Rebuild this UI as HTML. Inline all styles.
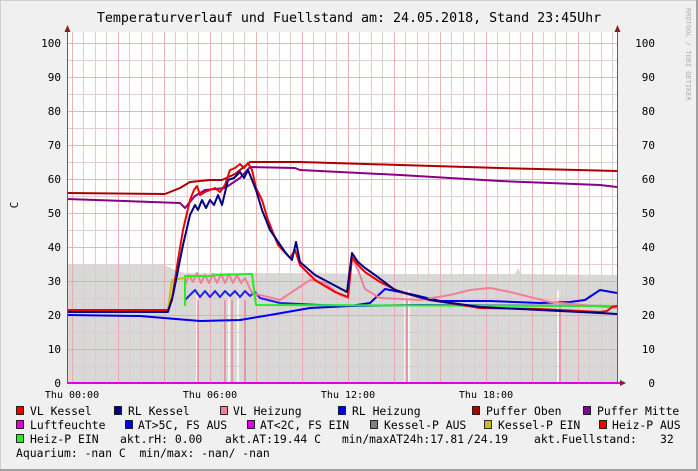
<!DOCTYPE html>
<html><head><meta charset="utf-8"><style>
body{margin:0;width:698px;height:471px;overflow:hidden;background:#f0f0f0}
svg{display:block}
text{font-family:"DejaVu Sans Mono","Liberation Mono",monospace;fill:#000;white-space:pre}
</style></head><body>
<svg width="698" height="471" xmlns="http://www.w3.org/2000/svg" xml:space="preserve">
<rect x="0" y="0" width="698" height="471" fill="#f0f0f0"/>
<path d="M0.5 470.5V0.5H697.5" stroke="#d0d0d0" fill="none"/>
<path d="M697 0V470H0" stroke="#a0a0a0" stroke-width="2" fill="none"/>
<text x="349" y="22" font-size="13.3" text-anchor="middle">Temperaturverlauf und Fuellstand am: 24.05.2018, Stand 23:45Uhr</text>
<text transform="translate(686,8) rotate(90)" font-size="7" style="fill:#b0b0b0">RRDTOOL / TOBI OETIKER</text>
<rect x="67" y="32" width="550" height="351" fill="#fff"/>
<polygon fill="#d8d8d8" points="67,265 165,265 175,270 185,273 300,273 400,274 515,274 518,268 521,274 617,275 617,383 67,383"/>
<g stroke="#fff" stroke-width="1.5"><line x1="197" y1="295" x2="197" y2="383"/><line x1="229" y1="295" x2="229" y2="383"/><line x1="238" y1="295" x2="238" y2="383"/><line x1="405" y1="290" x2="405" y2="383"/><line x1="409" y1="290" x2="409" y2="383"/><line x1="558" y1="290" x2="558" y2="383"/></g>
<g stroke-width="1">
<g stroke="#e0c8c8" opacity="0.9">
<path d="M83.5 32V383M95.5 32V383M106.5 32V383M129.5 32V383M141.5 32V383M152.5 32V383M175.5 32V383M187.5 32V383M198.5 32V383M221.5 32V383M233.5 32V383M244.5 32V383M267.5 32V383M279.5 32V383M290.5 32V383M313.5 32V383M325.5 32V383M336.5 32V383M359.5 32V383M371.5 32V383M382.5 32V383M405.5 32V383M417.5 32V383M428.5 32V383M451.5 32V383M463.5 32V383M474.5 32V383M497.5 32V383M509.5 32V383M520.5 32V383M543.5 32V383M555.5 32V383M566.5 32V383M589.5 32V383M601.5 32V383M612.5 32V383"/>
<path d="M67 366.5H617M67 332.5H617M67 298.5H617M67 264.5H617M67 230.5H617M67 196.5H617M67 162.5H617M67 128.5H617M67 94.5H617M67 60.5H617"/>
</g>
<g stroke="#f0a0a0" opacity="0.8">
<path d="M72.5 32V383M118.5 32V383M164.5 32V383M210.5 32V383M256.5 32V383M302.5 32V383M348.5 32V383M394.5 32V383M440.5 32V383M486.5 32V383M532.5 32V383M578.5 32V383"/>
<path d="M67 349.5H617M67 315.5H617M67 281.5H617M67 247.5H617M67 213.5H617M67 179.5H617M67 145.5H617M67 111.5H617M67 77.5H617M67 43.5H617"/>
</g>
</g>
<g fill="none" stroke-width="2" stroke-linejoin="round">
<polyline stroke="#f08098" stroke-width="1.5" points="198,300 198,383"/>
<polyline stroke="#f08098" stroke-width="1.5" points="225,300 225,383"/>
<polyline stroke="#f08098" stroke-width="1.5" points="232,300 232,383"/>
<polyline stroke="#f08098" stroke-width="1.5" points="245,300 245,383"/>
<polyline stroke="#f08098" stroke-width="1.5" points="407,300 407,383"/>
<polyline stroke="#f08098" stroke-width="1.5" points="560,300 560,383"/>
<polyline stroke="#0000ee" points="67,315 140,316 200,321 240,320 270,315 310,308 350,306 370,303 385,289 410,294 440,301 490,301 540,303 570,302 585,300 600,290 617,293"/>
<polyline stroke="#2020ee" points="185,300 190,295 195,290 200,297 205,291 210,297 215,291 220,297 225,291 230,296 235,291 240,297 245,291 250,296 255,292 260,298 280,303 320,305 350,306 420,305 617,306"/>
<polyline stroke="#f08098" points="185,285 189,275 193,282 197,273 201,283 205,275 209,283 213,274 217,283 221,274 225,283 229,274 233,283 237,275 241,283 245,278 252,293 280,300 295,290 310,280 325,283 340,295 348,298 352,258 358,270 365,289 380,298 420,300 450,295 470,290 490,288 510,292 550,302 617,308"/>
<polyline stroke="#22ee22" points="185,306 185,276 210,276 216,275 252,274 256,305 617,306"/>
<polyline stroke="#c8c000" points="168,310 172,280 185,278"/>
<polyline stroke="#aa0000" points="67,193 165,194 180,188 190,182 210,180 222,180 235,174 250,162 300,162 400,165 500,168 617,171"/>
<polyline stroke="#880088" points="67,199 180,203 185,208 195,196 205,190 225,188 240,178 250,167 295,168 300,170 400,175 500,181 600,185 617,187"/>
<polyline stroke="#ee0000" points="67,310 168,310 172,300 178,260 183,230 190,200 194,190 197,186 200,195 205,192 215,188 220,192 225,185 230,170 235,168 240,164 244,168 248,163 252,170 256,188 262,200 268,220 278,245 290,258 295,250 300,265 315,280 335,292 348,297 352,257 358,265 365,272 380,282 400,292 430,300 480,308 540,309 600,312 607,311 612,307 617,306"/>
<polyline stroke="#000080" points="67,312 168,312 173,295 178,270 183,245 190,215 195,205 198,210 202,200 206,208 210,200 214,205 218,195 222,205 228,180 234,178 240,172 244,178 248,170 252,180 256,190 262,210 270,230 285,252 292,260 296,242 300,262 315,275 330,283 347,292 352,253 358,262 365,268 375,275 395,290 430,300 480,307 540,310 600,313 617,314"/>
<line x1="67" y1="383" x2="622" y2="383" stroke="#e000e0" stroke-width="2"/>
</g>
<g stroke="#606060" stroke-width="1"><line x1="67.5" y1="32" x2="67.5" y2="383"/><line x1="617.5" y1="32" x2="617.5" y2="383"/></g>
<g fill="#802020"><path d="M64.5 32L67.5 25L70.5 32Z"/><path d="M614.5 32L617.5 25L620.5 32Z"/><path d="M620 380L626 383L620 386Z"/></g>
<g font-size="11" text-anchor="end">
<text x="61" y="47">100</text><text x="61" y="81">90</text><text x="61" y="115">80</text><text x="61" y="149">70</text><text x="61" y="183">60</text><text x="61" y="217">50</text><text x="61" y="251">40</text><text x="61" y="285">30</text><text x="61" y="319">20</text><text x="61" y="353">10</text><text x="61" y="387">0</text>
</g>
<g font-size="11" text-anchor="end">
<text x="655" y="47">100</text><text x="655" y="81">90</text><text x="655" y="115">80</text><text x="655" y="149">70</text><text x="655" y="183">60</text><text x="655" y="217">50</text><text x="655" y="251">40</text><text x="655" y="285">30</text><text x="655" y="319">20</text><text x="655" y="353">10</text><text x="655" y="387">0</text>
</g>
<text transform="translate(18,205) rotate(-90)" font-size="11" text-anchor="middle">C</text>
<g font-size="10" text-anchor="middle">
<text x="72" y="398">Thu 00:00</text><text x="210" y="398">Thu 06:00</text><text x="348" y="398">Thu 12:00</text><text x="486" y="398">Thu 18:00</text>
</g>
<g stroke="#000" stroke-width="0.8">
<rect x="16.5" y="406.5" width="7" height="8" fill="#ee0000"/>
<rect x="114.5" y="406.5" width="7" height="8" fill="#000080"/>
<rect x="220.5" y="406.5" width="7" height="8" fill="#f08098"/>
<rect x="338.5" y="406.5" width="7" height="8" fill="#0000ee"/>
<rect x="472.5" y="406.5" width="7" height="8" fill="#aa0000"/>
<rect x="583.5" y="406.5" width="7" height="8" fill="#880088"/>
<rect x="16.5" y="420.5" width="7" height="8" fill="#e000e0"/>
<rect x="125.5" y="420.5" width="7" height="8" fill="#0000ee"/>
<rect x="247.5" y="420.5" width="7" height="8" fill="#e000e0"/>
<rect x="370.5" y="420.5" width="7" height="8" fill="#808080"/>
<rect x="484.5" y="420.5" width="7" height="8" fill="#c8c000"/>
<rect x="599.5" y="420.5" width="7" height="8" fill="#ee0000"/>
<rect x="16.5" y="434.5" width="7" height="8" fill="#22ee22"/>
</g>
<g font-size="11.4">
<text x="30" y="415">VL Kessel</text><text x="128" y="415">RL Kessel</text><text x="233" y="415">VL Heizung</text><text x="352" y="415">RL Heizung</text><text x="486" y="415">Puffer Oben</text><text x="597" y="415">Puffer Mitte</text>
<text x="30" y="429">Luftfeuchte</text><text x="138" y="429">AT&gt;5C, FS AUS</text><text x="260" y="429">AT&lt;2C, FS EIN</text><text x="384" y="429">Kessel-P AUS</text><text x="498" y="429">Kessel-P EIN</text><text x="612" y="429">Heiz-P AUS</text>
<text x="30" y="443">Heiz-P EIN</text><text x="120" y="443">akt.rH: 0.00</text><text x="225" y="443">akt.AT:19.44 C</text><text x="342" y="443" textLength="122" lengthAdjust="spacingAndGlyphs">min/maxAT24h:17.81</text><text x="467" y="443">/24.19</text><text x="534" y="443">akt.Fuellstand:</text><text x="660" y="443">32</text>
<text x="16" y="457">Aquarium: -nan C  min/max: -nan/ -nan</text>
</g>
</svg>
</body></html>
